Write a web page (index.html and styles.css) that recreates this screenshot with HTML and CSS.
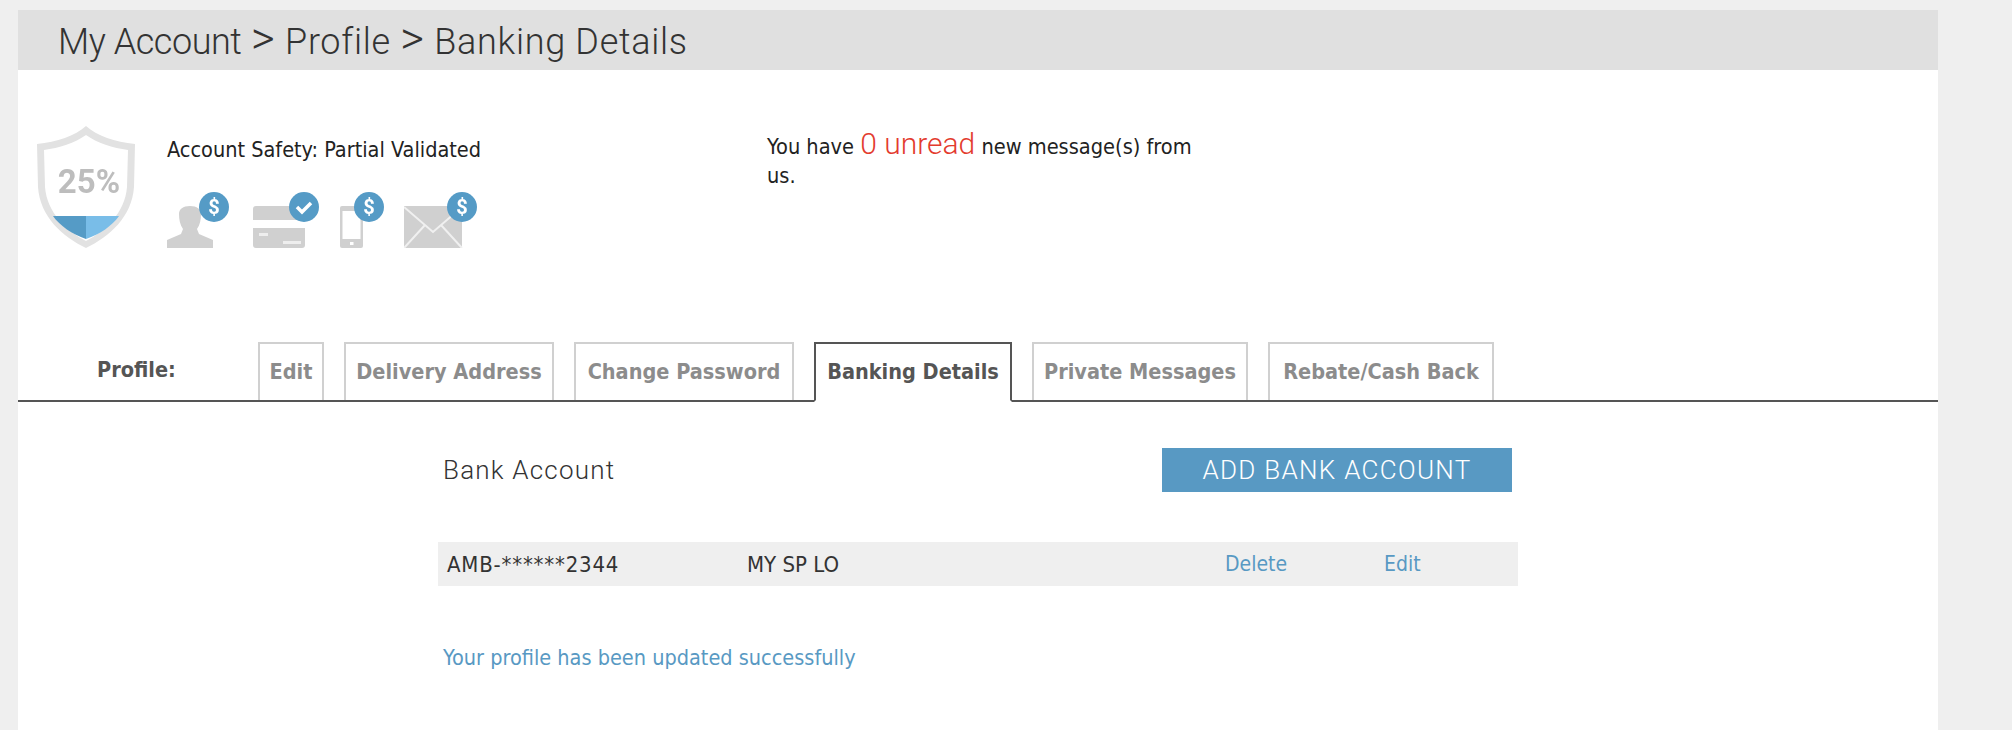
FILE: index.html
```html
<!DOCTYPE html>
<html lang="en">

<head>
    <meta charset="UTF-8">
    <title>Banking Details</title>
    <link rel="stylesheet" href="styles.css">
</head>

<body>
    <div class="panel">
        <div class="page-title"><span class="crumb-first">My Account</span> <span class="crumb-sep">&gt;</span> Profile <span class="crumb-sep">&gt;</span> Banking Details</div>

        <div class="summary">
            <svg class="shield" width="98" height="124" viewBox="0 0 98 124">
                <path d="M49 1 C60 11 78 17 98 19 L97 62 C95 92 72 112 49 123 C26 112 3 92 1 62 L0 19 C20 17 38 11 49 1 Z" fill="#e2e2e2" />
                <path d="M49 10 C60 18 76 23 91 25 L90 62 C88 88 68 106 49 116 C30 106 10 88 8 62 L7 25 C22 23 38 18 49 10 Z" fill="#fff" />
                <path d="M16 91 L49 91 L49 114 C35 109 23 101 16 91 Z" fill="#559bc6" />
                <path d="M82 91 L49 91 L49 114 C63 109 75 101 82 91 Z" fill="#79bde8" />
                <text class="shield-text" x="52" y="68" text-anchor="middle">25%</text>
            </svg>

            <div class="safety">
                <div class="safety-label">Account Safety: Partial Validated</div>
                <div class="safety-icons">
                    <svg class="icon-person" width="62" height="56" viewBox="0 0 62 56">
                        <path d="M0 56 L0 48 L14 42 L16 37 C13 33 12 27 12 22 C12 17 16 14 23 14 C30 14 34 17 34 22 C34 27 33 33 30 37 L32 42 L46 48 L46 56 Z" fill="#d0d0d0" />
                        <circle cx="47" cy="15" r="15" fill="#559bc6" />
                        <text class="badge-text" x="47" y="22" text-anchor="middle">$</text>
                    </svg>
                    <svg class="icon-card" width="66" height="56" viewBox="0 0 66 56">
                        <path d="M0 17 C0 15 1 14 3 14 L52 14 L52 28 L0 28 Z M0 36 L52 36 L52 53 C52 55 51 56 49 56 L3 56 C1 56 0 55 0 53 Z" fill="#d0d0d0" />
                        <rect x="6" y="41" width="9" height="3" fill="#eee" />
                        <rect x="30" y="49" width="18" height="3" fill="#eee" />
                        <circle cx="51" cy="15" r="15" fill="#559bc6" />
                        <path d="M44 15 L49 20 L58 11" fill="none" stroke="#fff" stroke-width="3.5" />
                    </svg>
                    <svg class="icon-phone" width="44" height="56" viewBox="0 0 44 56">
                        <rect x="0" y="14" width="23" height="42" rx="2" fill="#d0d0d0" />
                        <rect x="2.500" y="19" width="18" height="28" fill="#fff" />
                        <rect x="10" y="50" width="3.500" height="3" fill="#fff" />
                        <circle cx="29" cy="15" r="15" fill="#559bc6" />
                        <text class="badge-text" x="29" y="22" text-anchor="middle">$</text>
                    </svg>
                    <svg class="icon-mail" width="74" height="56" viewBox="0 0 74 56">
                        <rect x="0" y="14" width="58" height="42" fill="#d0d0d0" />
                        <path d="M0 15 L29 40 L58 15 M0 56 L21 33 M58 56 L37 33" fill="none" stroke="#f0f0f0" stroke-width="2" />
                        <circle cx="58" cy="15" r="15" fill="#559bc6" />
                        <text class="badge-text" x="58" y="22" text-anchor="middle">$</text>
                    </svg>
                </div>
            </div>

            <div class="messages">You have <span class="unread">0 unread</span> new message(s) from<br>us.</div>
        </div>

        <div class="tabs">
            <div class="tabs-label">Profile:</div>
            <a class="tab tab-edit">Edit</a>
            <a class="tab tab-address">Delivery Address</a>
            <a class="tab tab-password">Change Password</a>
            <a class="tab tab-banking active">Banking Details</a>
            <a class="tab tab-messages">Private Messages</a>
            <a class="tab tab-rebate">Rebate/Cash Back</a>
        </div>

        <div class="bank">
            <div class="bank-head">
                <div class="bank-title">Bank Account</div>
                <button class="add-button">ADD BANK ACCOUNT</button>
            </div>
            <div class="bank-row">
                <span class="bank-number">AMB-******2344</span>
                <span class="bank-name">MY SP LO</span>
                <a class="bank-delete">Delete</a>
                <a class="bank-edit">Edit</a>
            </div>
            <div class="bank-status">Your profile has been updated successfully</div>
        </div>
    </div>
</body>

</html>
```

FILE: styles.css
```css
body,
html {
    margin: 0;
    padding: 0;
    height: 100%;
    background-color: #efefef;
    overflow: hidden;
}

.panel {
    width: 1920px;
    height: 720px;
    margin: 10px 0 0 18px;
    background: #fff;
    font-family: "DejaVu Sans", sans-serif;
    font-stretch: condensed;
}

.page-title {
    height: 60px;
    line-height: 64px;
    padding-left: 40px;
    background: #e0e0e0;
    color: #333;
    font-family: Roboto, sans-serif;
    font-stretch: normal;
    font-weight: 300;
    font-size: 36px;
    letter-spacing: 0.7px;
}

.crumb-first {
    letter-spacing: -0.45px;
}

.crumb-sep {
    font-size: 46px;
    line-height: 36px;
}

.summary {
    display: flex;
    height: 272px;
    padding: 55px 0 0 19px;
    box-sizing: border-box;
}

.shield {
    flex: none;
    filter: blur(0.5px);
}

.shield-text {
    font-family: Roboto, sans-serif;
    font-stretch: normal;
    font-weight: 700;
    font-size: 33px;
    fill: #bdbdbd;
}

.safety {
    width: 600px;
    margin-left: 32px;
}

.safety-label {
    font-size: 21.500px;
    line-height: 28px;
    margin-top: 11px;
    color: #222;
}

.safety-icons {
    display: flex;
    gap: 20px;
    margin-top: 28px;
    filter: blur(0.4px);
}

.icon-person {
    margin-right: 4px;
}

.icon-card {
    margin-right: 1px;
}

.badge-text {
    font-family: Roboto, sans-serif;
    font-stretch: normal;
    font-weight: 700;
    font-size: 20px;
    fill: #fff;
}

.messages {
    width: 440px;
    font-size: 21.600px;
    line-height: 29px;
    margin-top: 7px;
    color: #222;
}

.unread {
    font-size: 30px;
    line-height: 24px;
    color: #e33b2e;
    font-family: Roboto, sans-serif;
    font-stretch: normal;
    font-weight: 300;
}

.tabs {
    display: flex;
    align-items: flex-end;
    height: 58px;
    padding-left: 79px;
    border-bottom: 2px solid #555;
}

.tabs-label {
    width: 161px;
    align-self: center;
    padding-bottom: 4px;
    font-weight: 700;
    font-size: 21.500px;
    color: #555;
}

.tab {
    box-sizing: border-box;
    height: 58px;
    line-height: 56px;
    margin-right: 20px;
    border: 2px solid #d0d0d0;
    border-bottom: none;
    text-align: center;
    font-weight: 700;
    font-size: 21.500px;
    color: #8c8c8c;
}

.tab-edit {
    width: 66px;
}

.tab-address {
    width: 210px;
}

.tab-password {
    width: 220px;
}

.tab-banking {
    width: 198px;
}

.tab-messages {
    width: 216px;
}

.tab-rebate {
    width: 226px;
}

.tab.active {
    height: 60px;
    margin-bottom: -2px;
    border: 2px solid #555;
    border-bottom: 2px solid #fff;
    background: #fff;
    color: #555;
}

.bank {
    width: 1080px;
    margin-left: 420px;
}

.bank-head {
    display: flex;
    justify-content: space-between;
    align-items: center;
    padding: 46px 6px 0 5px;
}

.bank-title {
    font-family: Roboto, sans-serif;
    font-stretch: normal;
    font-weight: 300;
    font-size: 26px;
    letter-spacing: 1.2px;
    color: #333;
}

.add-button {
    width: 350px;
    height: 44px;
    padding: 0;
    border: none;
    background: #5899c3;
    color: #fff;
    font-family: Roboto, sans-serif;
    font-stretch: normal;
    font-weight: 300;
    font-size: 26px;
    letter-spacing: 1.3px;
}

.bank-row {
    display: flex;
    align-items: center;
    height: 44px;
    margin-top: 50px;
    padding-left: 9px;
    background: #efefef;
    font-size: 22px;
    color: #333;
}

.bank-number {
    width: 300px;
    letter-spacing: 0.8px;
}

.bank-name {
    width: 478px;
}

.bank-delete {
    width: 159px;
    font-size: 21px;
    color: #5899c3;
}

.bank-edit {
    font-size: 21px;
    color: #5899c3;
}

.bank-status {
    margin: 59px 0 0 5px;
    font-size: 21.500px;
    color: #5899c3;
}
```
